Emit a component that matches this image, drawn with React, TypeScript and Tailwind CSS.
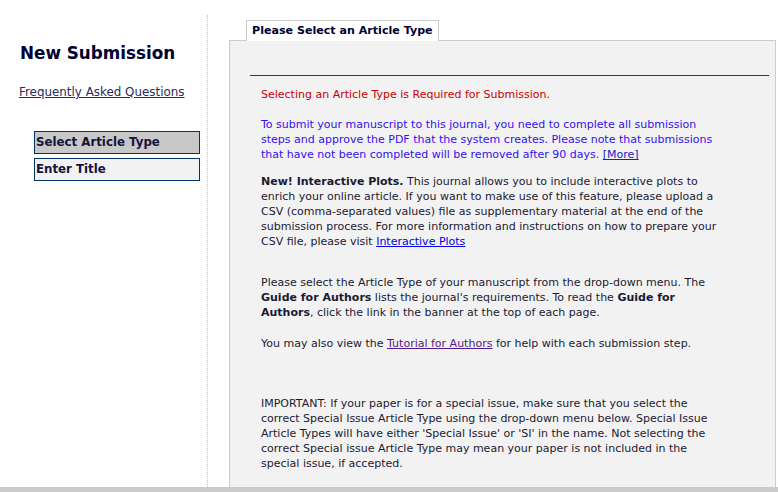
export default function App() {
  const body = "text-[11px] leading-[15px] whitespace-nowrap";

  return (
    <div
      className="w-[778px] h-[492px] overflow-hidden bg-white flex flex-col text-[#1a1a33]"
      style={{ fontFamily: '"DejaVu Sans", Verdana, sans-serif' }}
    >
      <div className="flex flex-1 min-h-0">
        {/* sidebar */}
        <div className="w-[207px] shrink-0 pl-[19px]">
          <h1 className="mt-[42px] pl-px text-[16.8px] leading-[22px] font-bold text-[#000033]">
            New Submission
          </h1>
          <a href="#" className="block mt-[21px] text-[11.9px] leading-[15px] underline text-[#2b2b5e]">
            Frequently Asked Questions
          </a>
          <div className="mt-[31px] ml-[15px] w-[166px] flex flex-col gap-[4px]">
            <div className="h-[23px] border border-[#003366] bg-[#c8c8c8] pl-px text-[11.8px] leading-[21px] font-bold text-[#14143a]">
              Select Article Type
            </div>
            <div className="h-[23px] border border-[#003366] bg-[#f2f2f2] pl-px text-[11.8px] leading-[21px] font-bold text-[#14143a]">
              Enter Title
            </div>
          </div>
        </div>

        <div className="mt-[15px] border-l border-dotted border-[#c4c4c4]" />

        {/* main */}
        <div className="flex-1 flex flex-col pl-[21px] pr-[2px] pt-[20px]">
          <div className="ml-[17px] self-start relative z-10 -mb-px h-[21px] border border-b-0 border-[#cccccc] bg-white px-[5px] text-[11.1px] leading-[20px] font-bold text-[#000033]">
            Please Select an Article Type
          </div>
          <div className="flex-1 border border-b-0 border-[#cccccc] bg-[#f2f2f2] pl-[20px] pr-[6px] pt-[34px]">
            <div className="h-px bg-[#bb0000]" />
            <div className="pl-[11px] pt-[11px]">
              <p className={`${body} text-[#cc0000]`}>
                Selecting an Article Type is Required for Submission.
              </p>
              <p className={`${body} mt-[15px] text-[#3311ee]`}>
                To submit your manuscript to this journal, you need to complete all submission
                <br />
                steps and approve the PDF that the system creates. Please note that submissions
                <br />
                that have not been completed will be removed after 90 days.{" "}
                <a href="#" className="underline text-[#1a1acc]">[More]</a>
              </p>
              <p className={`${body} mt-[12px]`}>
                <b>New! Interactive Plots.</b> This journal allows you to include interactive plots to
                <br />
                enrich your online article. If you want to make use of this feature, please upload a
                <br />
                CSV (comma-separated values) file as supplementary material at the end of the
                <br />
                submission process. For more information and instructions on how to prepare your
                <br />
                CSV file, please visit{" "}
                <a href="#" className="underline text-[#0000ee]">Interactive Plots</a>
              </p>
              <p className={`${body} mt-[26px]`}>
                Please select the Article Type of your manuscript from the drop-down menu. The
                <br />
                <b>Guide for Authors</b> lists the journal's requirements. To read the <b>Guide for</b>
                <br />
                <b>Authors</b>, click the link in the banner at the top of each page.
              </p>
              <p className={`${body} mt-[16px]`}>
                You may also view the{" "}
                <a href="#" className="underline text-[#551a8b]">Tutorial for Authors</a> for help with each submission step.
              </p>
              <p className={`${body} mt-[45px]`}>
                IMPORTANT: If your paper is for a special issue, make sure that you select the
                <br />
                correct Special Issue Article Type using the drop-down menu below. Special Issue
                <br />
                Article Types will have either 'Special Issue' or 'SI' in the name. Not selecting the
                <br />
                correct Special issue Article Type may mean your paper is not included in the
                <br />
                special issue, if accepted.
              </p>
            </div>
          </div>
        </div>
      </div>
      <div className="h-[5px] shrink-0 bg-[#cacaca]" />
    </div>
  );
}
